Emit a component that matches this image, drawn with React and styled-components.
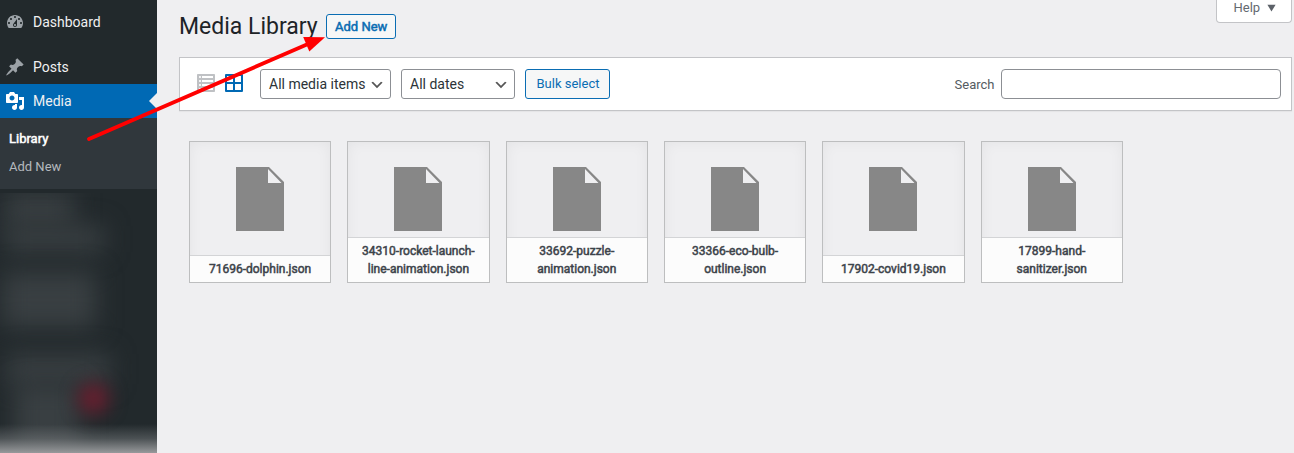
import React from "react";
import styled, { createGlobalStyle, css } from "styled-components";

const GlobalStyle = createGlobalStyle`
  * { box-sizing: border-box; }
  html, body { margin: 0; height: 100%; overflow: hidden; }
  body {
    background: #efeff1;
    color: #3c434a;
    font: 13px/18px Roboto, "Liberation Sans", sans-serif;
  }
`;

const Page = styled.div`
  display: flex;
  width: 1294px;
  height: 453px;
  position: relative;
  overflow: hidden;
`;

const Sidebar = styled.nav`
  width: 157px;
  flex: none;
  display: flex;
  flex-direction: column;
  background: #22292c;
  padding-top: 5px;
`;

const MenuItem = styled.a`
  display: flex;
  align-items: center;
  height: 34px;
  flex: none;
  padding: 0 0 0 5px;
  gap: 8px;
  color: #f0f0f1;
  font-size: 14px;
  margin-top: ${(p) => p.$gap || 0}px;
  position: relative;
  svg { width: 20px; height: 20px; fill: ${(p) => (p.$active ? "#fff" : "#9ca2a7")}; }
  ${(p) =>
    p.$active &&
    css`
      background: #0069b4;
      &::after {
        content: "";
        position: absolute;
        right: 0;
        top: 9px;
        border: 8px solid transparent;
        border-left-width: 0;
        border-right-color: #efeff1;
      }
    `}
`;

const Submenu = styled.div`
  background: #30373c;
  height: 71px;
  flex: none;
  padding: 7px 9px;
`;

const SubItem = styled.a`
  display: block;
  height: 28px;
  line-height: 27px;
  color: ${(p) => (p.$current ? "#fff" : "#b4b9be")};
  -webkit-text-stroke: ${(p) => (p.$current ? "0.5px #fff" : "0")};
`;

const Redacted = styled.div`
  flex: 1;
  margin-top: 4px;
  overflow: hidden;
  position: relative;
  display: flex;
  flex-direction: column;
  align-items: flex-start;
  &::after {
    content: "";
    position: absolute;
    inset: auto 0 0;
    height: 29px;
    background: linear-gradient(rgba(152, 155, 157, 0), rgba(152, 155, 157, 0.35) 50%, #97999b);
  }
`;

const Smudge = styled.div`
  flex: none;
  width: ${(p) => p.$w}px;
  height: ${(p) => p.$h}px;
  margin: ${(p) => p.$top || 0}px 0 0 ${(p) => p.$left || 0}px;
  background: #393f42;
  filter: blur(12px);
`;

const RedSpot = styled.div`
  position: absolute;
  left: 78px;
  top: 190px;
  width: 31px;
  height: 31px;
  border-radius: 50%;
  background: #671f2f;
  filter: blur(9px);
`;

const Main = styled.main`
  flex: 1;
  padding: 0 2px 0 22px;
`;

const Header = styled.header`
  display: flex;
  height: 57px;
  align-items: flex-start;
`;

const Title = styled.h1`
  margin: 12px 8px 0 0;
  font-size: 23px;
  line-height: 30px;
  font-weight: 400;
  color: #1d2327;
`;

const Button = styled.button`
  font: 13px/1 Roboto, sans-serif;
  width: ${(p) => p.$w}px;
  height: ${(p) => p.$h}px;
  margin: ${(p) => p.$m};
  padding: 0 0 ${(p) => p.$pb || 0}px 1px;
  color: #0a6db3;
  background: #f6f7f7;
  border: 1px solid #0a6db3;
  border-radius: 3px;
  -webkit-text-stroke: ${(p) => (p.$strong ? "0.5px #0a6db3" : "0")};
`;

const Help = styled.div`
  display: flex;
  padding-left: 16.5px;
  gap: 7px;
  margin-left: auto;
  width: 76px;
  height: 23px;
  line-height: 15px;
  color: #646970;
  background: #fff;
  border: 1px solid #c3c4c7;
  border-top: 0;
  border-radius: 0 0 4px 4px;
  svg { margin-top: 4px; fill: #5c6168; }
`;

const Toolbar = styled.section`
  display: flex;
  align-items: flex-start;
  height: 54px;
  padding: 11px 10px 0 16px;
  background: #fff;
  border: 1px solid #c3c4c7;
  box-shadow: 0 1px 1px rgba(0, 0, 0, 0.04);
`;

const ViewIcon = styled.svg`
  width: 20px;
  height: 20px;
  margin: 4px 8px 0 0;
  fill: ${(p) => (p.$on ? "#0069b4" : "#bfc1c4")};
`;

const Select = styled.div`
  display: flex;
  align-items: center;
  justify-content: space-between;
  width: ${(p) => p.$w}px;
  height: 30px;
  margin-left: ${(p) => p.$ml}px;
  padding: 0 5px 0 8px;
  font-size: 14px;
  color: #2c3338;
  border: 1px solid #8c8f94;
  border-radius: 3px;
  white-space: nowrap;
  svg { width: 16px; height: 16px; margin-top: 1px; fill: #555; }
`;

const SearchLabel = styled.label`
  margin: 7px 6.5px 0 auto;
  color: #555b61;
`;

const SearchInput = styled.input`
  width: 280px;
  height: 30px;
  border: 1px solid #8c8f94;
  border-radius: 4px;
  background: #fff;
`;

const Grid = styled.div`
  display: grid;
  grid-template-columns: repeat(6, 142.35px);
  gap: 16px;
  padding: 30px 0 0 9.9px;
`;

const Card = styled.figure`
  margin: 0;
  height: 142px;
  display: flex;
  flex-direction: column;
  align-items: center;
  position: relative;
  border: 1px solid #bdbebf;
  box-shadow: inset 0 0 14px rgba(0, 0, 0, 0.05);
  & > svg { margin-top: 25px; flex: none; }
`;

const Caption = styled.figcaption`
  position: absolute;
  inset: auto 0 0;
  padding: 4px 8px;
  text-align: center;
  background: #fcfcfc;
  border-top: 1px solid #d3d4d6;
  font-size: 12px;
  line-height: 18px;
  color: #3c434a;
  -webkit-text-stroke: 0.5px #3c434a;
  white-space: pre-line;
`;

const Arrow = styled.svg`
  position: absolute;
  left: 0;
  top: 0;
  pointer-events: none;
`;

const Glyph = ({ d }) => (
  <svg viewBox="0 0 20 20"><path d={d} fillRule="evenodd" /></svg>
);

const DASHBOARD = "M3.76 16h12.48c1.1-1.37 1.76-3.11 1.76-5 0-4.42-3.58-8-8-8s-8 3.58-8 8c0 1.89.66 3.63 1.76 5zM10 4c.55 0 1 .45 1 1s-.45 1-1 1-1-.45-1-1 .45-1 1-1zM6 6c.55 0 1 .45 1 1s-.45 1-1 1-1-.45-1-1 .45-1 1-1zm8 0c.55 0 1 .45 1 1s-.45 1-1 1-1-.45-1-1 .45-1 1-1zm-5.37 5.55L12 7v6c0 1.1-.9 2-2 2s-2-.9-2-2c0-.57.24-1.08.63-1.45zM4 10c.55 0 1 .45 1 1s-.45 1-1 1-1-.45-1-1 .45-1 1-1zm12 0c.55 0 1 .45 1 1s-.45 1-1 1-1-.45-1-1 .45-1 1-1zm-5 3c0-.55-.45-1-1-1s-1 .45-1 1 .45 1 1 1 1-.45 1-1z";
const PIN = "M10.44 3.02l1.82-1.82 6.36 6.35-1.83 1.82c-1.05-.68-2.48-.57-3.41.36l-.75.75c-.92.93-1.04 2.35-.35 3.41l-1.83 1.82-2.41-2.41-2.8 2.79c-.42.42-3.38 2.71-3.8 2.29s1.86-3.39 2.28-3.81l2.79-2.79L4.1 9.36l1.83-1.82c1.05.69 2.48.57 3.4-.36l.75-.75c.93-.92 1.05-2.35.36-3.41z";
const MEDIA = "M13 11V4c0-.55-.45-1-1-1h-1.67L9 1H5L3.67 3H2c-.55 0-1 .45-1 1v7c0 .55.45 1 1 1h10c.55 0 1-.45 1-1zM7 4.5c1.38 0 2.5 1.12 2.5 2.5S8.38 9.5 7 9.5 4.5 8.38 4.5 7 5.62 4.5 7 4.5zM14 6h5v10.5c0 1.38-1.12 2.5-2.5 2.5S14 17.88 14 16.5s1.12-2.5 2.5-2.5c.17 0 .34.02.5.05V9h-3V6zm-4 8.05V13h2v3.5c0 1.38-1.12 2.5-2.5 2.5S7 17.88 7 16.5 8.12 14 9.5 14c.17 0 .34.02.5.05z";
const CHEVRON = "M5 6l5 5 5-5 2 1-7 7-7-7 2-1z";

const files = [
  "71696-dolphin.json",
  "34310-rocket-launch-\nline-animation.json",
  "33692-puzzle-\nanimation.json",
  "33366-eco-bulb-\noutline.json",
  "17902-covid19.json",
  "17899-hand-\nsanitizer.json",
];

export default function App() {
  return (
    <Page>
      <GlobalStyle />
      <Sidebar>
        <MenuItem><Glyph d={DASHBOARD} />Dashboard</MenuItem>
        <MenuItem $gap={11}><Glyph d={PIN} />Posts</MenuItem>
        <MenuItem $active><Glyph d={MEDIA} />Media</MenuItem>
        <Submenu>
          <SubItem $current>Library</SubItem>
          <SubItem>Add New</SubItem>
        </Submenu>
        <Redacted>
          <Smudge $w={70} $h={33} $left={4} />
          <Smudge $w={100} $h={26} $left={4} />
          <Smudge $w={94} $h={56} $left={2} $top={20} />
          <Smudge $w={104} $h={30} $left={6} $top={26} />
          <Smudge $w={66} $h={66} $left={14} />
          <RedSpot />
        </Redacted>
      </Sidebar>
      <Main>
        <Header>
          <Title>Media Library</Title>
          <Button $w={70} $h={25} $m="14px 0 0" $strong>Add New</Button>
          <Help>
            Help
            <svg width="9" height="8" viewBox="0 0 9 8"><path d="M.4.8h8.2L4.5 7.4z" /></svg>
          </Help>
        </Header>
        <Toolbar>
          <ViewIcon viewBox="0 0 20 20">
            <path fillRule="evenodd" d="M2 19h16c.55 0 1-.45 1-1V2c0-.55-.45-1-1-1H2c-.55 0-1 .45-1 1v16c0 .55.45 1 1 1zM4 3c.55 0 1 .45 1 1s-.45 1-1 1-1-.45-1-1 .45-1 1-1zm13 0v2H6V3h11zM4 7c.55 0 1 .45 1 1s-.45 1-1 1-1-.45-1-1 .45-1 1-1zm13 0v2H6V7h11zM4 11c.55 0 1 .45 1 1s-.45 1-1 1-1-.45-1-1 .45-1 1-1zm13 0v2H6v-2h11zM4 15c.55 0 1 .45 1 1s-.45 1-1 1-1-.45-1-1 .45-1 1-1zm13 0v2H6v-2h11z" />
          </ViewIcon>
          <ViewIcon viewBox="0 0 20 20" $on>
            <path fillRule="evenodd" d="M2 1h16q1 0 1 1v16q0 1-1 1H2q-1 0-1-1V2q0-1 1-1zM3 3v6h6V3zm8 0v6h6V3zM3 11v6h6v-6zm8 0v6h6v-6z" />
          </ViewIcon>
          <Select $w={131} $ml={8}>All media items<Glyph d={CHEVRON} /></Select>
          <Select $w={114} $ml={10}>All dates<Glyph d={CHEVRON} /></Select>
          <Button $w={85} $h={30} $m="0 0 0 10px" $pb={2}>Bulk select</Button>
          <SearchLabel htmlFor="media-search">Search</SearchLabel>
          <SearchInput id="media-search" />
        </Toolbar>
        <Grid>
          {files.map((name) => (
            <Card key={name}>
              <svg width="48" height="64" viewBox="0 0 48 64">
                <path fill="#878787" fillRule="evenodd" d="M0 0h33l15 15v49H0zM32 2v14h13.5z" />
              </svg>
              <Caption>{name}</Caption>
            </Card>
          ))}
        </Grid>
      </Main>
      <Arrow width="1294" height="453">
        <path d="M89 139L308 44" stroke="#f00" strokeWidth="3.8" strokeLinecap="round" />
        <path d="M325 37.3L303.2 37L309.3 51.5z" fill="#f00" />
      </Arrow>
    </Page>
  );
}
